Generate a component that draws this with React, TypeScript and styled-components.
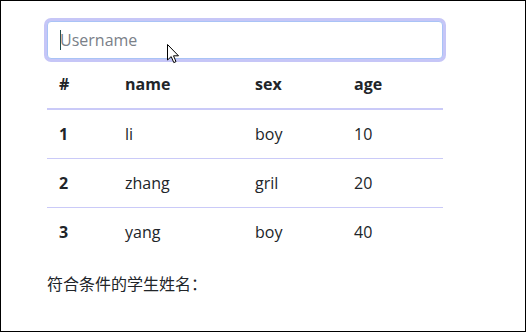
import React from "react";
import styled, { createGlobalStyle } from "styled-components";

const Global = createGlobalStyle`
  html, body { margin: 0; padding: 0; background: #fff; }
  body { font-family: "Open Sans", "Noto Sans CJK SC", sans-serif; font-size: 16px; line-height: 1.5; color: #212529; }
  * { box-sizing: border-box; }
`;

const Frame = styled.div`
  width: 526px;
  height: 332px;
  border: 1px solid #000;
  padding: 20px 0 0 46px;
  overflow: hidden;
`;

const Container = styled.div`
  position: relative;
  width: 396px;
`;

const InputWrap = styled.div`
  position: relative;
`;

const SearchInput = styled.input`
  display: block;
  width: 100%;
  height: 38px;
  padding: 6px 12px;
  font-family: inherit;
  font-size: 16px;
  line-height: 1.5;
  color: #495057;
  background: #fff;
  border: 1px solid #a9c3f6;
  border-radius: 4px;
  box-shadow: 0 0 0 3px #c6c6f7;
  outline: none;
  &::placeholder { color: #7a8088; }
`;

const Caret = styled.span`
  position: absolute;
  left: 13px;
  top: 9px;
  width: 1px;
  height: 20px;
  background: #24504f;
`;

const Pointer = styled.svg`
  position: absolute;
  left: 120px;
  top: 23px;
  pointer-events: none;
`;

const Table = styled.table`
  width: 100%;
  table-layout: fixed;
  border-collapse: separate;
  border-spacing: 0;
  margin-bottom: 16px;
`;

const Th = styled.th`
  text-align: left;
  font-weight: 700;
  padding: 12px;
  border-top: 1px solid #cacaf8;
  border-bottom: 2px solid #cacaf8;
`;

const Td = styled.td<{ $first?: boolean; $bold?: boolean }>`
  padding: 12px;
  font-weight: ${(p) => (p.$bold ? 700 : 400)};
  border-top: ${(p) => (p.$first ? "none" : "1px solid #cacaf8")};
`;

const Result = styled.p`
  margin: 0;
  font-size: 16px;
`;

const rows = [
  { id: 1, name: "li", sex: "boy", age: 10 },
  { id: 2, name: "zhang", sex: "gril", age: 20 },
  { id: 3, name: "yang", sex: "boy", age: 40 },
];

export default function App() {
  return (
    <>
      <Global />
      <Frame>
        <Container>
          <InputWrap>
            <SearchInput placeholder="Username" />
            <Caret />
          </InputWrap>
          <Table>
            <colgroup>
              <col style={{ width: 66 }} />
              <col style={{ width: 130 }} />
              <col style={{ width: 99 }} />
              <col style={{ width: 101 }} />
            </colgroup>
            <thead>
              <tr>
                <Th>#</Th>
                <Th>name</Th>
                <Th>sex</Th>
                <Th>age</Th>
              </tr>
            </thead>
            <tbody>
              {rows.map((r, i) => (
                <tr key={r.id}>
                  <Td $first={i === 0} $bold>{r.id}</Td>
                  <Td $first={i === 0}>{r.name}</Td>
                  <Td $first={i === 0}>{r.sex}</Td>
                  <Td $first={i === 0}>{r.age}</Td>
                </tr>
              ))}
            </tbody>
          </Table>
          <Result>符合条件的学生姓名：</Result>
          <Pointer width="13" height="20" viewBox="0 0 13 20">
            <path d="M0.5 0.5 L0.5 16 L4.2 12.6 L6.8 18.6 L9 17.6 L6.5 11.8 L11.5 11.8 Z" fill="#fff" stroke="#000" strokeWidth="1" strokeLinejoin="round" />
          </Pointer>
        </Container>
      </Frame>
    </>
  );
}
